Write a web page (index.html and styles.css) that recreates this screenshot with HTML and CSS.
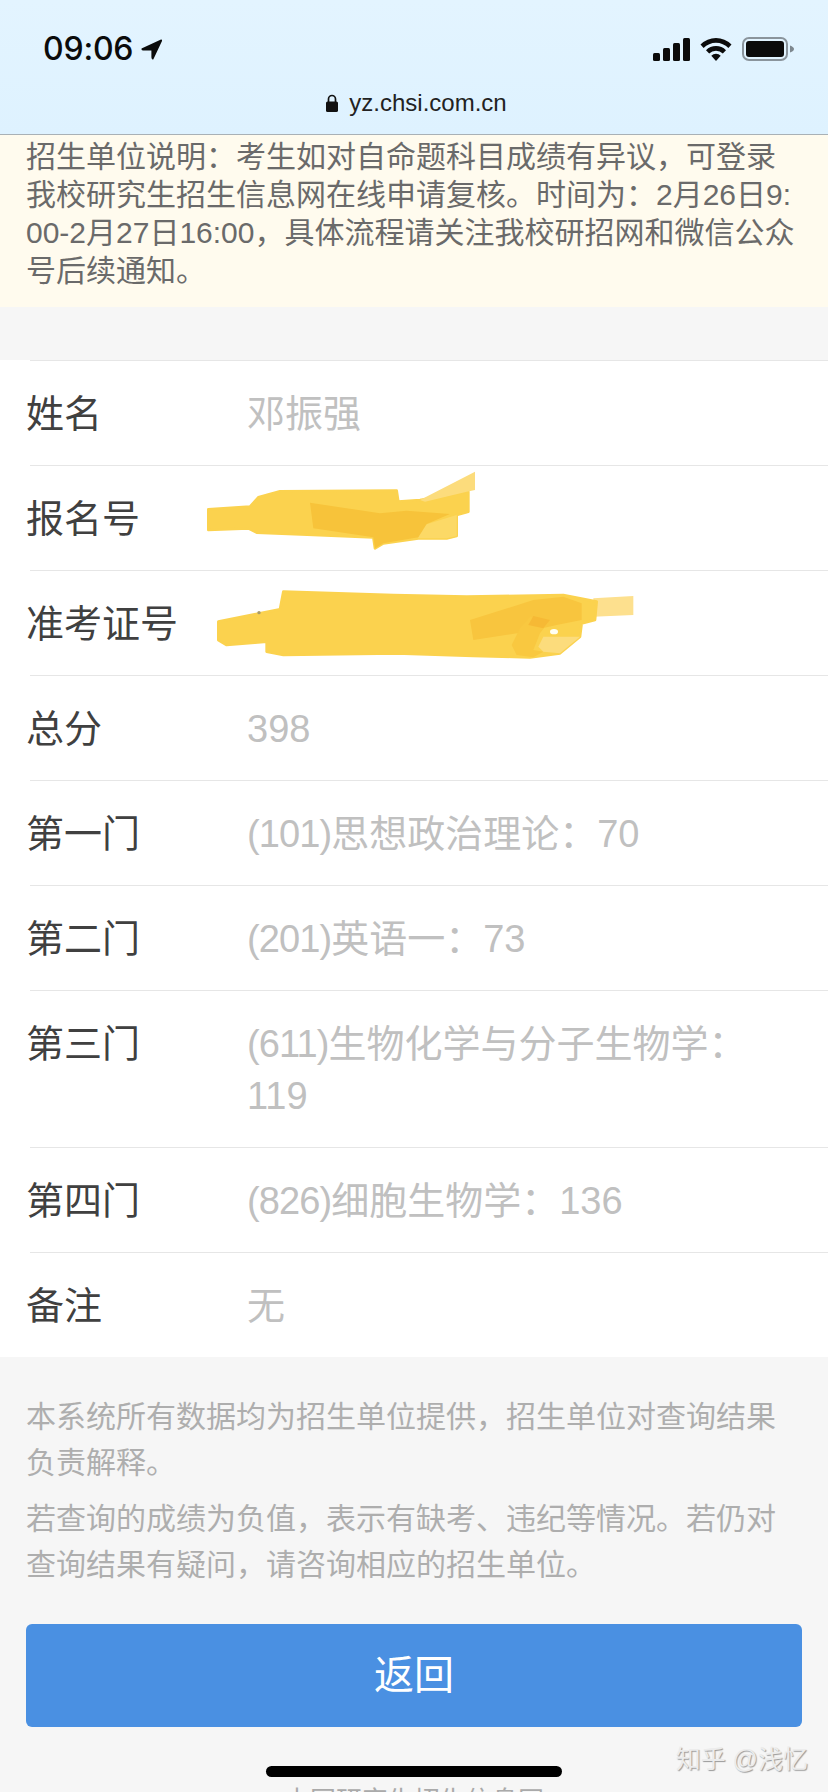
FILE: index.html
```html
<!DOCTYPE html>
<html lang="zh-CN">
<head>
<meta charset="utf-8">
<title>成绩查询</title>
<link rel="stylesheet" href="styles.css">
</head>
<body>
<div class="page">
  <header class="browser">
    <div class="status">
      <div class="clock">
        <span class="time">09:06</span>
        <svg class="arrow" viewBox="0 0 22 21"><path d="M0.5 9.5 L20 0.5 Q21.5 0.2 21 2 L12.5 20 Q12 21 11 20 Q10.4 19.6 10.4 18 L10.4 11.5 L2 11.5 Q0 11.3 0.5 9.5Z"/></svg>
      </div>
      <div class="indicators">
        <svg class="signal" viewBox="0 0 37 23"><rect x="0" y="15" width="7" height="8" rx="1.5"/><rect x="10" y="10" width="7" height="13" rx="1.5"/><rect x="20" y="5" width="7" height="18" rx="1.5"/><rect x="30" y="0" width="7" height="23" rx="1.5"/></svg>
        <svg class="wifi" viewBox="0 0 32 24"><path d="M0.5 7.5 A22 22 0 0 1 31.5 7.5 L28.4 11 A17.5 17.5 0 0 0 3.6 11Z"/><path d="M6 13.2 A14 14 0 0 1 26 13.2 L22.8 16.6 A9.5 9.5 0 0 0 9.2 16.6Z"/><path d="M11.3 18.8 A6.6 6.6 0 0 1 20.7 18.8 L16 24Z"/></svg>
        <svg class="battery" viewBox="0 0 52 24"><rect x="1" y="1" width="44" height="22" rx="6" fill="none" stroke="#8a949c" stroke-width="2"/><rect x="4" y="4" width="38" height="16" rx="3"/><path d="M48 8.5 Q52 10 52 12 Q52 14 48 15.5Z" fill="#7d878e"/></svg>
      </div>
    </div>
    <div class="address">
      <svg class="lock" viewBox="0 0 12 18"><path d="M2.5 8 V5 A3.5 3.5 0 0 1 9.5 5 V8" fill="none" stroke="#111" stroke-width="1.7"/><rect x="0" y="7.5" width="12" height="10.5" rx="1.6" fill="#111"/></svg>
      <span class="url">yz.chsi.com.cn</span>
    </div>
  </header>

  <section class="notice">招生单位说明：考生如对自命题科目成绩有异议，可登录我校研究生招生信息网在线申请复核。时间为：2月26日9:00-2月27日16:00，具体流程请关注我校研招网和微信公众号后续通知。</section>

  <section class="results">
    <div class="row"><div class="label">姓名</div><div class="value">邓振强</div></div>
    <div class="row"><div class="label">报名号</div><div class="value">&nbsp;</div></div>
    <div class="row"><div class="label">准考证号</div><div class="value">&nbsp;</div></div>
    <div class="row"><div class="label">总分</div><div class="value">398</div></div>
    <div class="row"><div class="label">第一门</div><div class="value"><span class="code">(101)</span>思想政治理论：70</div></div>
    <div class="row"><div class="label">第二门</div><div class="value"><span class="code">(201)</span>英语一：73</div></div>
    <div class="row"><div class="label">第三门</div><div class="value"><span class="code">(611)</span>生物化学与分子生物学：119</div></div>
    <div class="row"><div class="label">第四门</div><div class="value"><span class="code">(826)</span>细胞生物学：136</div></div>
    <div class="row"><div class="label">备注</div><div class="value">无</div></div>
  </section>

  <footer class="foot">
    <p class="tip">本系统所有数据均为招生单位提供，招生单位对查询结果负责解释。</p>
    <p class="tip">若查询的成绩为负值，表示有缺考、违纪等情况。若仍对查询结果有疑问，请咨询相应的招生单位。</p>
    <button class="back" type="button">返回</button>
    <div class="site">中国研究生招生信息网</div>
  </footer>

  <svg class="scribble" viewBox="0 0 1440 690">
    <g class="blur">
      <path fill="#fbd24e" stroke="#fbd24e" d="M85 178 L210 170 L235 142 L300 124 L650 122 L655 155 L720 150 L865 125 L865 185 L830 195 L830 258 L800 265 L715 265 L610 280 L585 295 L580 262 L400 255 L230 248 L205 235 L85 240Z"/>
      <path fill="#fcdc7c" d="M720 150 L885 65 L885 120 L860 125 L735 155Z"/>
      <path fill="#fcd966" d="M715 230 L830 195 L830 258 L800 265 L715 265Z"/>
      <path fill="#f7c33a" d="M390 158 L600 190 L680 182 L810 192 L740 222 L715 262 L610 280 L585 295 L580 262 L400 235Z"/>
      <path fill="#fde08e" d="M1240 445 L1360 438 L1360 495 L1240 500Z"/>
      <path fill="#fbd24e" stroke="#fbd24e" d="M115 515 L300 478 L310 425 L640 435 L860 440 L1150 435 L1250 455 L1245 510 L1205 520 L1200 560 L1140 610 L1050 622 L880 618 L650 610 L310 615 L260 605 L260 575 L140 585 L115 570Z"/>
      <path fill="#f8c53e" d="M870 510 L1060 450 L1150 440 L1205 460 L1205 510 L1130 525 L1040 545 L880 570Z"/>
      <path fill="#f9c840" d="M995 585 L1020 535 L1050 500 L1110 510 L1080 550 L1060 600 L1090 605 L1060 622 L1010 615Z"/>
      <path fill="#f6b935" d="M1045 525 L1060 498 L1110 510 L1090 535Z"/>
      <path fill="#fcdc7c" d="M1090 560 L1200 560 L1140 610 L1090 605 L1075 590Z"/>
    </g>
    <ellipse cx="1122" cy="545" rx="12" ry="8" fill="#fffef2"/>
    <circle cx="237" cy="488" r="5" fill="#a89a6a"/>
  </svg>

  <div class="home"></div>
  <div class="mark">知乎 @浅忆</div>
</div>
</body>
</html>
```

FILE: styles.css
```css
* { box-sizing: border-box; }
html, body { margin: 0; padding: 0; }
body {
  width: 828px;
  height: 1792px;
  overflow: hidden;
  background: #f6f6f6;
  font-family: "Liberation Sans", "Noto Sans CJK SC", sans-serif;
}
.page { position: relative; width: 828px; height: 1792px; overflow: hidden; }

.browser {
  height: 135px;
  background: linear-gradient(#e3f4ff, #def2ff);
  border-bottom: 1px solid #a9b1b6;
  display: flex;
  flex-direction: column;
}
.status {
  height: 88px;
  padding: 29px 34px 0 43px;
  display: flex;
  justify-content: space-between;
  align-items: flex-start;
}
.clock { display: flex; align-items: center; gap: 8px; }
.time {
  font-family: "Inter", "Liberation Sans", sans-serif;
  font-size: 32px;
  line-height: 40px;
  font-weight: 500;
  color: #0b0b0b;
  letter-spacing: -0.2px;
}
.arrow { width: 22px; height: 21px; fill: #0b0b0b; }
.indicators { display: flex; align-items: center; gap: 10px; height: 40px; }
.signal { width: 37px; height: 23px; fill: #0b0b0b; }
.wifi { width: 32px; height: 24px; fill: #0b0b0b; }
.battery { width: 52px; height: 24px; fill: #0b0b0b; }
.address {
  display: flex;
  justify-content: center;
  align-items: center;
  gap: 11px;
  height: 30px;
  padding-left: 5px;
}
.lock { width: 12px; height: 18px; }
.url { font-size: 24px; line-height: 30px; color: #222; }

.notice {
  height: 172px;
  padding: 3px 26px 0;
  background: #fffbee;
  color: #6a6a6a;
  font-size: 30px;
  line-height: 38px;
  word-break: break-all;
}

.results { margin-top: 53px; background: #fff; padding-left: 30px; }
.row {
  display: flex;
  border-top: 1px solid #e6e6e6;
  padding: 27px 26px 25px 0;
  font-size: 38px;
  line-height: 52px;
}
.label { width: 221px; margin-left: -4px; flex: none; color: #404040; }
.value { flex: 1; color: #c0c0c0; }
.code { letter-spacing: -0.9px; }

.foot { padding: 37px 26px 0; }
.tip { margin: 0 0 10px; font-size: 30px; line-height: 46px; color: #aeaeae; }
.back {
  display: block;
  width: 100%;
  height: 103px;
  margin-top: 36px;
  padding: 0 0 8px;
  border: 0;
  border-radius: 6px;
  background: #4a90e2;
  color: #fff;
  font: inherit;
  font-size: 40px;
}
.site { margin-top: 59px; text-align: center; font-size: 26px; line-height: 30px; color: #aaa; }

.scribble { position: absolute; left: 180px; top: 450px; width: 480px; height: 230px; }
.blur { filter: blur(2px); }
.blur path { stroke-width: 8; stroke-linejoin: round; }
.home {
  position: absolute;
  left: 266px;
  top: 1766px;
  width: 296px;
  height: 11px;
  border-radius: 6px;
  background: #000;
}
.mark {
  position: absolute;
  right: 20px;
  top: 1741px;
  font-size: 25px;
  line-height: 36px;
  color: #ececec;
  text-shadow: 1px 1px 1px #9a9a9a;
}
```
